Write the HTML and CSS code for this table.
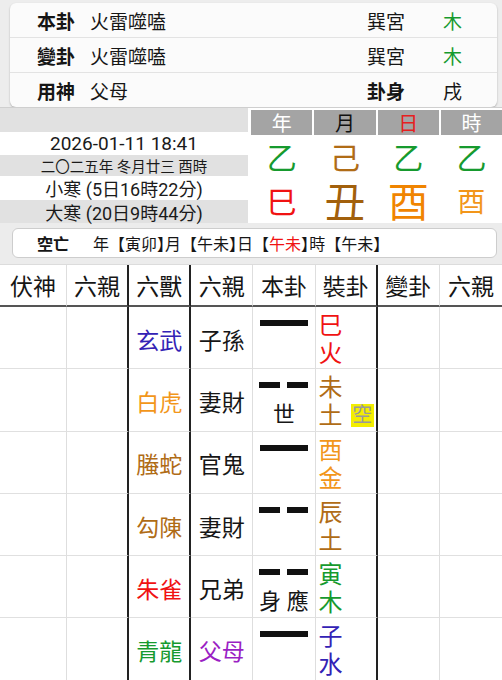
FILE: index.html
```html
<!DOCTYPE html>
<html lang="zh-Hant">
<head>
<meta charset="utf-8">
<title>卦</title>
<link rel="stylesheet" href="styles.css">
</head>
<body>
<div class="top-card">
  <div class="top-row"><span class="lbl">本卦</span><span>火雷噬嗑</span><span>巽宮</span><span class="green">木</span></div>
  <div class="top-row"><span class="lbl">變卦</span><span>火雷噬嗑</span><span>巽宮</span><span class="green">木</span></div>
  <div class="top-row"><span class="lbl">用神</span><span>父母</span><span class="lbl">卦身</span><span>戌</span></div>
</div>

<div class="mid">
  <div class="dates">
    <div class="band g h1"></div>
    <div class="band h2 date">2026-01-11 18:41</div>
    <div class="band g h3 lunar">二〇二五年 冬月廿三 酉時</div>
    <div class="band h4">小寒 (5日16時22分)</div>
    <div class="band g h5">大寒 (20日9時44分)</div>
  </div>
  <div class="pillars">
    <div class="ph">年</div>
    <div class="ph black">月</div>
    <div class="ph red">日</div>
    <div class="ph">時</div>
    <div class="stem green">乙</div>
    <div class="stem brown">己</div>
    <div class="stem green">乙</div>
    <div class="stem green">乙</div>
    <div class="branch red">巳</div>
    <div class="branch big brown2">丑</div>
    <div class="branch big orange2">酉</div>
    <div class="branch small orange">酉</div>
  </div>
</div>

<div class="kw-wrap">
  <div class="kw">
    <span class="kw-lbl">空亡</span>
    <span class="kw-txt">年【寅卯<span class="cb">】</span>月【午未<span class="cb">】</span>日【<span class="red">午未</span><span class="cb">】</span>時【午未<span class="cb">】</span></span>
  </div>
</div>

<div class="tbl">
  <div class="hd">伏神</div><div class="hd thick">六親</div><div class="hd thick">六獸</div><div class="hd">六親</div><div class="hd">本卦</div><div class="hd thick">裝卦</div><div class="hd">變卦</div><div class="hd last">六親</div>

  <div class="cell"></div><div class="cell thick"></div><div class="cell thick txt blue">玄武</div><div class="cell txt">子孫</div>
  <div class="cell yao"><div class="yang"></div></div>
  <div class="cell thick nj"><div class="chars red">巳<br>火</div></div>
  <div class="cell"></div><div class="cell last"></div>

  <div class="cell"></div><div class="cell thick"></div><div class="cell thick txt orange">白虎</div><div class="cell txt">妻財</div>
  <div class="cell yao"><div class="yin"><span></span><span></span></div><div class="mark">世</div></div>
  <div class="cell thick nj"><div class="chars brown">未<br>土</div><div class="kong">空</div></div>
  <div class="cell"></div><div class="cell last"></div>

  <div class="cell"></div><div class="cell thick"></div><div class="cell thick txt brown">螣蛇</div><div class="cell txt">官鬼</div>
  <div class="cell yao"><div class="yang"></div></div>
  <div class="cell thick nj"><div class="chars orange">酉<br>金</div></div>
  <div class="cell"></div><div class="cell last"></div>

  <div class="cell"></div><div class="cell thick"></div><div class="cell thick txt brown">勾陳</div><div class="cell txt">妻財</div>
  <div class="cell yao"><div class="yin"><span></span><span></span></div></div>
  <div class="cell thick nj"><div class="chars brown">辰<br>土</div></div>
  <div class="cell"></div><div class="cell last"></div>

  <div class="cell"></div><div class="cell thick"></div><div class="cell thick txt red">朱雀</div><div class="cell txt">兄弟</div>
  <div class="cell yao"><div class="yin"><span></span><span></span></div><div class="mark">身 應</div></div>
  <div class="cell thick nj"><div class="chars green">寅<br>木</div></div>
  <div class="cell"></div><div class="cell last"></div>

  <div class="cell"></div><div class="cell thick"></div><div class="cell thick txt green">青龍</div><div class="cell txt purple">父母</div>
  <div class="cell yao"><div class="yang"></div></div>
  <div class="cell thick nj"><div class="chars blue">子<br>水</div></div>
  <div class="cell"></div><div class="cell last"></div>
</div>
</body>
</html>
```

FILE: styles.css
```css
html, body {
  margin: 0;
  padding: 0;
}
body {
  background: #ededed;
  font-family: Roboto, "Noto Sans CJK TC", sans-serif;
  color: #161616;
  width: 502px;
  overflow: hidden;
}

.green { color: #169a2e; }
.brown { color: #b06c16; }
.brown2 { color: #a2600c; }
.orange { color: #f2961a; }
.orange2 { color: #f08400; }
.red { color: #f01212; }
.blue { color: #3322b5; }
.purple { color: #9b1fc4; }
.black { color: #111; }

/* top card */
.top-card {
  margin: 3px 5px 0 10px;
  background: #fbfbfb;
  border-radius: 6px;
  box-shadow: 0 1px 2px rgba(0, 0, 0, 0.28);
}
.top-row {
  display: grid;
  grid-template-columns: 53px 1fr 76px 54px;
  padding-left: 27px;
  height: 34px;
  align-items: center;
  font-size: 19px;
}
.top-row + .top-row {
  border-top: 1px solid #e3e3e3;
}
.lbl { font-weight: 700; }

/* middle */
.mid {
  display: flex;
  gap: 3px;
  background: #fff;
  border-top: 1px solid #cfcfcf;
}
.dates {
  width: 248px;
  display: flex;
  flex-direction: column;
}
.band {
  display: flex;
  align-items: center;
  justify-content: center;
  font-size: 18px;
  white-space: nowrap;
  color: #1a1a1a;
}
.band.g { background: #e1e1e1; }
.h1 { height: 24px; }
.h2 { height: 23px; }
.h3 { height: 21px; }
.h4 { height: 24px; }
.h5 { height: 23px; }
.date { font-size: 19px; }
.lunar { font-size: 14.5px; }

.pillars {
  flex: 1;
  display: grid;
  grid-template-columns: repeat(4, 1fr);
  grid-template-rows: 25px 48px 40px;
  column-gap: 2px;
  padding-top: 2px;
}
.ph {
  background: #a4a4a4;
  color: #fff;
  font-size: 20px;
  display: flex;
  align-items: center;
  justify-content: center;
}
.ph.black { color: #111; }
.ph.red { color: #e62020; }
.stem, .branch {
  display: flex;
  align-items: center;
  justify-content: center;
  line-height: 1;
}
.stem { font-size: 30px; }
.branch { font-size: 30px; }
.branch.big { font-size: 41px; }
.branch.small { font-size: 28px; }

/* kong wang */
.kw-wrap {
  background: #ececec;
  padding: 5px 5px 6px 12px;
}
.kw {
  height: 28px;
  background: #fff;
  border: 1px solid #cdcdcd;
  border-radius: 6px;
  display: flex;
  align-items: center;
  padding-left: 24px;
  font-size: 16px;
}
.kw-lbl {
  font-weight: 700;
  margin-right: 24px;
}
.cb { font-feature-settings: "halt"; }

/* table */
.tbl {
  display: grid;
  grid-template-columns: 67px repeat(7, 1fr);
  grid-template-rows: 42px;
  grid-auto-rows: 62.3px;
  background: #fff;
  border-top: 1px solid #dcdcdc;
}
.hd, .cell {
  box-sizing: border-box;
  border-right: 1px solid #dedede;
}
.hd {
  border-bottom: 2px solid #555;
  font-size: 23px;
  display: flex;
  align-items: center;
  justify-content: center;
}
.cell {
  border-bottom: 1px solid #e0e0e0;
}
.hd.thick, .cell.thick {
  border-right: 2px solid #222;
}
.hd.last, .cell.last { border-right: none; }

.txt {
  display: flex;
  align-items: center;
  justify-content: center;
  font-size: 23px;
  padding-top: 2px;
}

.yao {
  display: flex;
  flex-direction: column;
  align-items: center;
  padding-top: 13px;
}
.yang {
  width: 48px;
  height: 6px;
  background: #111;
}
.yin {
  width: 49px;
  height: 6px;
  display: flex;
  justify-content: space-between;
}
.yin span {
  width: 21px;
  height: 6px;
  background: #111;
}
.mark {
  font-size: 22px;
  line-height: 24px;
  margin-top: 15px;
  white-space: pre;
}

.nj {
  display: flex;
  padding: 5px 0 0 3px;
}
.chars {
  font-size: 24px;
  line-height: 28px;
}
.kong {
  margin-left: auto;
  margin-right: 2px;
  align-self: flex-end;
  margin-bottom: 4px;
  width: 23px;
  height: 23px;
  background: #f3ee00;
  color: #9a9a9a;
  font-size: 20px;
  line-height: 23px;
  text-align: center;
}
```
